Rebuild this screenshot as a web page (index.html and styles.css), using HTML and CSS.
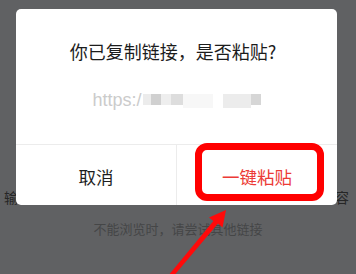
FILE: index.html
```html
<!DOCTYPE html>
<html lang="zh">
<head>
<meta charset="utf-8">
<link rel="stylesheet" href="styles.css">
</head>
<body>
<div class="page">
  <div class="input-row"><span>输入链接</span><span>粘贴内容</span></div>
  <div class="hint">不能浏览时，请尝试其他链接</div>
</div>

<div class="dialog">
  <div class="dialog-body">
    <div class="title">你已复制链接，是否粘贴?</div>
    <div class="url">
      <span class="url-text">https:/</span>
      <span class="mosaic">
        <i class="m1"></i><i class="m2"></i><i class="m3"></i><i class="m4"></i><i class="m5"></i><i class="m6"></i><i class="m7"></i><i class="m8"></i>
      </span>
    </div>
  </div>
  <div class="dialog-footer">
    <div class="btn cancel">取消</div>
    <div class="btn confirm">一键粘贴</div>
  </div>
</div>

<div class="highlight"></div>
<svg class="arrow" width="356" height="274" viewBox="0 0 356 274">
  <polygon fill="#ff0a0a" points="226,210 209,217.5 213.4,221 168.4,275.5 172,278 218,223.6 222.5,227.6"/>
</svg>
</body>
</html>
```

FILE: styles.css
```css
html, body {
  margin: 0;
  padding: 0;
}
body {
  width: 356px;
  height: 274px;
  overflow: hidden;
  background: #606163;
  font-family: "Noto Sans CJK SC", "Noto Sans", sans-serif;
  position: relative;
}
.page {
  padding-top: 187px;
}
.input-row {
  display: flex;
  justify-content: space-between;
  padding: 0 7px 0 4px;
  font-size: 14px;
  line-height: 20px;
  color: #262626;
}
.hint {
  margin-top: 13px;
  text-align: center;
  font-size: 13px;
  line-height: 18px;
  color: #454647;
}
.dialog {
  position: absolute;
  left: 16px;
  top: 9px;
  width: 321px;
  height: 196px;
  background: #fff;
  border-radius: 5px;
  display: flex;
  flex-direction: column;
}
.dialog-body {
  height: 136px;
  padding-top: 30px;
  box-sizing: border-box;
  border-bottom: 1px solid #ececec;
}
.title {
  text-align: center;
  font-size: 18px;
  line-height: 24px;
  color: #1c1c1c;
  padding-right: 7px;
}
.url {
  margin-top: 25px;
  display: flex;
  justify-content: center;
  align-items: center;
  height: 24px;
}
.url-text {
  font-family: "Liberation Sans", Arial, sans-serif;
  font-size: 18px;
  color: #cbcbcb;
  line-height: 24px;
}
.mosaic {
  display: flex;
  align-items: flex-start;
  height: 14px;
  margin-top: 2px;
  margin-left: 1px;
}
.mosaic i {
  display: block;
  height: 11px;
}
.m1 { width: 8px; background: #ececec; }
.m2 { width: 10px; background: #d0d0d0; }
.m3 { width: 10px; background: #eeeeee; }
.m4 { width: 12px; background: #dddddd; }
.m5 { width: 30px; height: 14px !important; background: #f7f7f7; }
.m6 { width: 10px; background: #ffffff; }
.m7 { width: 28px; height: 14px !important; background: #ececec; }
.m8 { width: 10px; background: #d6d6d6; }
.dialog-footer {
  flex: 1;
  display: flex;
}
.btn {
  flex: 1;
  display: flex;
  align-items: center;
  justify-content: center;
  font-size: 17.5px;
  padding-top: 3px;
}
.cancel {
  color: #1e1e1e;
  border-right: 1px solid #ececec;
}
.confirm {
  color: #ec3a36;
}
.highlight {
  position: absolute;
  left: 195px;
  top: 143px;
  width: 129px;
  height: 58px;
  box-sizing: border-box;
  border: 7px solid #ff0000;
  border-radius: 12px;
}
.arrow {
  position: absolute;
  left: 0;
  top: 0;
}
```
